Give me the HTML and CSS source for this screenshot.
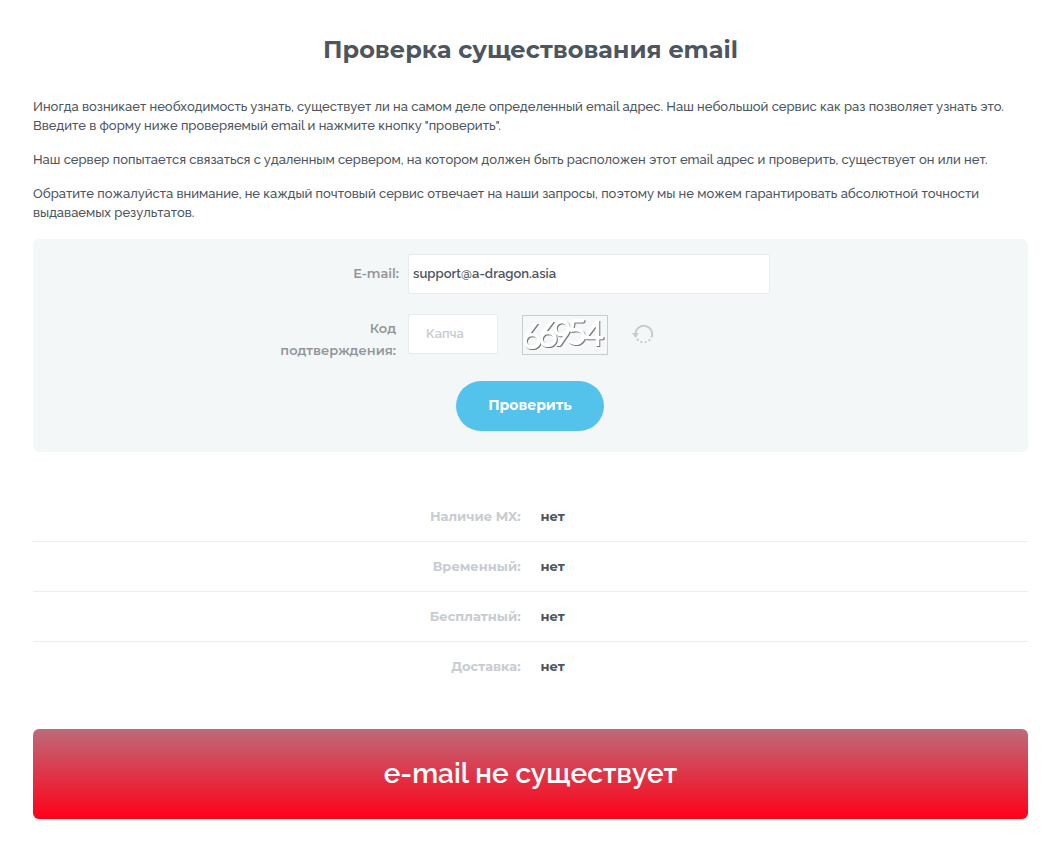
FILE: index.html
```html
<!DOCTYPE html>
<html lang="ru">
<head>
<meta charset="utf-8">
<meta name="viewport" content="width=device-width, initial-scale=1">
<title>Проверка существования email</title>
<link rel="stylesheet" href="styles.css">
</head>
<body>
<main class="page">
  <h1 class="title">Проверка существования email</h1>
  <div class="intro">
    <p>Иногда возникает необходимость узнать, существует ли на самом деле определенный email адрес. Наш небольшой сервис как раз позволяет узнать это.<br>Введите в форму ниже проверяемый email и нажмите кнопку "проверить".</p>
    <p>Наш сервер попытается связаться с удаленным сервером, на котором должен быть расположен этот email адрес и проверить, существует он или нет.</p>
    <p>Обратите пожалуйста внимание, не каждый почтовый сервис отвечает на наши запросы, поэтому мы не можем гарантировать абсолютной точности<br>выдаваемых результатов.</p>
  </div>
  <form class="form">
    <div class="field">
      <label class="label label-email" for="email">E-mail:</label>
      <input class="input input-email" id="email" type="text" value="support@a-dragon.asia">
    </div>
    <div class="field field-code">
      <label class="label label-code" for="captcha">Код подтверждения:</label>
      <input class="input input-captcha" id="captcha" type="text" placeholder="Капча">
      <svg class="captcha" width="86" height="40" viewBox="0 0 86 40" role="img" aria-label="66954">
        <rect class="captcha-frame" x="0.5" y="0.5" width="85" height="39"/>
        <text class="captcha-digits" x="0 16 30 45 62" y="33 31 30 29 30">66954</text>
      </svg>
      <button class="reload" type="button" aria-label="Обновить">
        <svg width="22" height="20" viewBox="0 0 22 20" fill="none" stroke="#c8ccd1" stroke-width="2">
          <path d="M3.5 10a8.3 8.3 0 1 1 15.8 3.6"/>
          <path d="M18 15.5a8.3 8.3 0 0 1-14-2.5" stroke-dasharray="2 2.2"/>
          <path d="M0 9h7l-3.5 5z" fill="#c8ccd1" stroke="none"/>
        </svg>
      </button>
    </div>
    <button class="submit" type="button">Проверить</button>
  </form>
  <table class="results">
    <tbody>
      <tr><th scope="row">Наличие MX:</th><td>нет</td></tr>
      <tr><th scope="row">Временный:</th><td>нет</td></tr>
      <tr><th scope="row">Бесплатный:</th><td>нет</td></tr>
      <tr><th scope="row">Доставка:</th><td>нет</td></tr>
    </tbody>
  </table>
  <div class="verdict">e-mail не существует</div>
</main>
</body>
</html>
```
FILE: styles.css
```css
* { box-sizing: border-box; }

body {
  margin: 0;
  background: #fff;
  color: #4d555e;
  font: 500 13px/19px Raleway, Inter, "Noto Sans", sans-serif;
}

.page { padding: 33px 27px 32px 33px; }

.title {
  margin: 0 0 30px;
  font: 700 24px/34px Montserrat, Inter, sans-serif;
  text-align: center;
}

.intro p { margin: 0 0 15px; }
.intro p:last-child { margin-bottom: 17px; }

.form {
  display: flex;
  flex-direction: column;
  gap: 20px;
  padding: 15px 16px 21px 15px;
  border-radius: 6px;
  background: #f3f7f8;
}

.field {
  display: flex;
  align-items: center;
  padding-left: 225px;
}

.field-code { align-items: flex-start; }

.label {
  width: 126px;
  margin-right: 9px;
  color: #939599;
  font: 600 13px/22px Montserrat, Inter, sans-serif;
  text-align: right;
}

.label-email { padding-bottom: 2px; }
.label-code { width: 123px; margin-right: 12px; padding-top: 3px; }

.input {
  height: 40px;
  border: 1px solid #e9ecee;
  border-radius: 2px;
  background: #fff;
  color: #4d555e;
  font: inherit;
  font-weight: 600;
}

.input-email { flex: 0 1 362px; padding: 0 4px 2px; }
.input-captcha { width: 90px; padding: 0 17px 2px; }
.input-captcha::placeholder { color: #c8ccd1; opacity: 1; }

.captcha { margin: 1px 0 0 24px; flex: none; }
.captcha-frame { fill: #f5f8f9; stroke: #c8ccd1; }
.captcha-digits {
  font: 300 34px Lato, sans-serif;
  fill: #fff;
  stroke: #fff;
  stroke-width: 2px;
  filter: drop-shadow(1px 1px 0 #777);
}

.reload {
  display: flex;
  margin: 10px 0 0 24px;
  padding: 0;
  border: 0;
  background: none;
}

.submit {
  align-self: center;
  width: 148px;
  height: 50px;
  padding: 0 0 2px;
  border: 0;
  border-radius: 25px;
  background: #54c3ec;
  color: #fff;
  font: 700 14px/20px Montserrat, Inter, sans-serif;
}

.results {
  width: 100%;
  margin: 40px 0 38px;
  border-collapse: collapse;
  table-layout: fixed;
  font: 700 13px/19px Montserrat, Inter, sans-serif;
}

.results tr + tr { border-top: 1px solid #ebecee; }
.results th { width: 49%; padding: 15px 0; color: #c8ccd1; text-align: right; }
.results td { padding: 15px 20px; }

.verdict {
  padding: 25px;
  border-radius: 6px;
  background: linear-gradient(#bd6b79, #ff0018);
  color: #fff;
  font-size: 28px;
  line-height: 40px;
  font-weight: 600;
  text-align: center;
}
```
